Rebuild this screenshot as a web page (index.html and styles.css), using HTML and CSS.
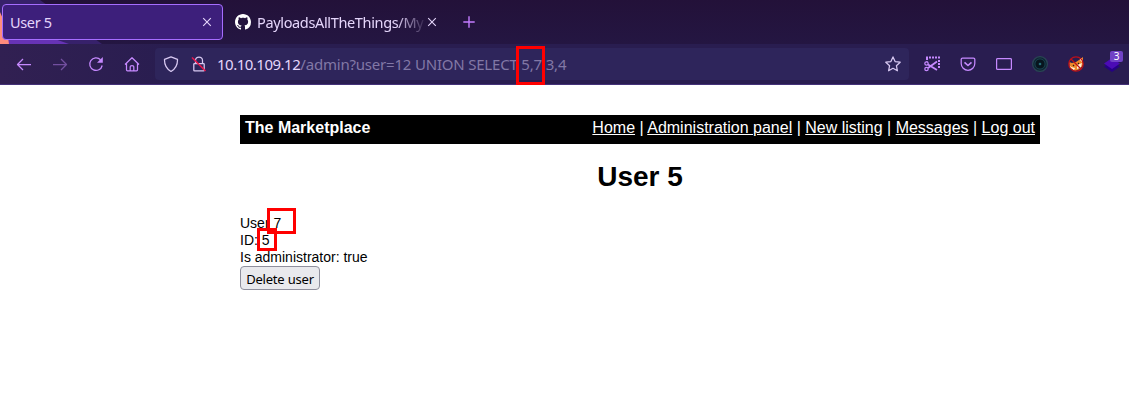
FILE: index.html
```html
<!DOCTYPE html>
<html lang="en">
<head>
<meta charset="utf-8">
<title>User 5</title>
<link rel="stylesheet" href="styles.css">
</head>
<body>
<header class="browser">
  <div class="tabs">
    <svg class="theme-art" width="240" height="44" viewBox="0 0 240 44"><path d="M0 0h40l62 44H0z" fill="#37216b"/><path d="M0 20l69 24H0z" fill="#6733b5"/><path d="M0 12q7 14 9 32H0z" fill="#ff8c7d"/></svg>
    <div class="tab active"><span class="tab-title">User 5</span><svg class="close" width="10" height="10" viewBox="0 0 10 10"><path d="M1.2 1.2l7.6 7.6M8.8 1.2L1.2 8.8"/></svg></div>
    <div class="tab"><svg class="github" width="16" height="16" viewBox="0 0 16 16"><path d="M8 0C3.58 0 0 3.58 0 8c0 3.54 2.29 6.53 5.47 7.59.4.07.55-.17.55-.38 0-.19-.01-.82-.01-1.49-2.01.37-2.53-.49-2.69-.94-.09-.23-.48-.94-.82-1.13-.28-.15-.68-.52-.01-.53.63-.01 1.08.58 1.23.82.72 1.21 1.87.87 2.33.66.07-.52.28-.87.51-1.07-1.78-.2-3.64-.89-3.64-3.95 0-.87.31-1.59.82-2.15-.08-.2-.36-1.02.08-2.12 0 0 .67-.21 2.2.82.64-.18 1.32-.27 2-.27s1.36.09 2 .27c1.53-1.04 2.2-.82 2.2-.82.44 1.1.16 1.92.08 2.12.51.56.82 1.27.82 2.15 0 3.07-1.87 3.75-3.65 3.95.29.25.54.73.54 1.48 0 1.07-.01 1.93-.01 2.2 0 .21.15.46.55.38A8.01 8.01 0 0016 8c0-4.42-3.58-8-8-8z"/></svg><span class="tab-title faded">PayloadsAllTheThings/My</span><svg class="close" width="10" height="10" viewBox="0 0 10 10"><path d="M1.2 1.2l7.6 7.6M8.8 1.2L1.2 8.8"/></svg></div>
    <svg class="new-tab" width="12" height="12" viewBox="0 0 12 12"><path d="M6 .3v11.4M.3 6h11.4"/></svg>
  </div>
  <div class="toolbar">
    <div class="nav-buttons">
      <svg class="icon" viewBox="0 0 16 16"><path d="M15 8.500H1.500M7 3L1.500 8.500 7 14"/></svg>
      <svg class="icon disabled" viewBox="0 0 16 16"><path d="M1 8.500h13.500M9 3l5.500 5.500L9 14"/></svg>
      <svg class="icon" viewBox="0 0 16 16"><path d="M12.5 3.700A6.300 6.300 0 1 0 14.200 9.500"/><path d="M14.800 1v5.800H9z" fill="#c689ff" stroke="none"/></svg>
      <svg class="icon" viewBox="0 0 16 16"><path d="M1 8.500l7-6.800 7 6.800M2.500 7.300v6.500q0 1 1 1h9q1 0 1-1V7.300M6.200 14.800v-4q0-1.300 1.800-1.300t1.800 1.300v4"/></svg>
    </div>
    <div class="urlbar">
      <svg class="icon pale" viewBox="0 0 16 16"><path d="M8 .8l6.500 2.600C14.700 9 12.500 13 8 15.500 3.500 13 1.300 9 1.500 3.400z"/></svg>
      <svg class="icon pale lock" viewBox="0 0 16 16"><path d="M4.500 7.500V4.500a3.500 3.500 0 0 1 7 0v3M3.500 7.500h9q.7 0 .7.700v6q0 .7-.7.700h-9q-.7 0-.7-.700v-6q0-.7.700-.700z"/><path d="M1 1.500l13.500 13.500" stroke="#e8174b" stroke-width="1.600"/></svg>
      <span class="url"><b>10.10.109.12</b>/admin?user=12 UNION SELECT 5,7,3,4</span>
      <svg class="icon pale star" viewBox="0 0 16 16"><path d="M8 .9l2.100 4.700 5.100.6-3.800 3.500 1 5.100L8 12.300l-4.400 2.500 1-5.100L.8 6.200l5.100-.6z"/></svg>
    </div>
    <div class="extensions">
      <svg class="icon" viewBox="0 0 16 16"><path d="M2 1.500h14" stroke-width="2" stroke-dasharray="2 1"/><path d="M15 4v8M3 2v3.500" stroke-width="2" stroke-dasharray="2 1"/><circle cx="2.500" cy="7.500" r="1.700"/><circle cx="2.500" cy="13" r="1.700"/><path d="M4 8.500l9 5.500M4 12l9-6.500" stroke-width="1.800"/></svg>
      <svg class="icon" viewBox="0 0 16 16"><path d="M2.500 2h11q1.300 0 1.300 1.300V7.500a6.800 6.800 0 0 1-13.600 0V3.300Q1.200 2 2.500 2z"/><path d="M4.500 6.300L8 9.500l3.500-3.200" stroke-width="1.600"/></svg>
      <svg class="icon" viewBox="0 0 16 16"><rect x=".6" y="2.600" width="14.800" height="10.800" rx="1"/></svg>
      <svg class="icon" viewBox="0 0 16 16"><circle cx="8" cy="8" r="7.400" fill="#102532" stroke="#294454"/><circle cx="8" cy="8" r="5.100" fill="#08151e" stroke="#174452" stroke-width="1"/><circle cx="8" cy="8" r="1.300" fill="#246d79" stroke="none"/></svg>
      <svg class="icon" viewBox="0 0 16 16"><path d="M1 6l3 1 4-1 3-2 4-3v8l-3 4-5 2-5-3z" fill="#ed872a" stroke="none"/><path d="M1 9l2 2 4 1-1 2-4-3zM9 9l5-2-1 4-4 2zM13 2l1 1v3l-2-2z" fill="#fff0dd" stroke="none"/><path d="M5 9l1 1M10 7l1 1" stroke="#35180f"/><circle cx="8" cy="8" r="7.200" stroke="#bc1019"/><path d="M3 3l10 10" stroke="#bc1019"/></svg>
      <div class="layers"><svg class="icon" viewBox="0 0 16 16"><path d="M8 5l8 5.500-8 5.500-8-5.500z" fill="#260084" stroke="none"/><path d="M8 2l8 5.500L8 13 0 7.500z" fill="#4b0bb5" stroke="none"/></svg><span class="badge">3</span></div>
    </div>
  </div>
</header>
<main class="page">
  <nav class="site-nav"><strong>The Marketplace</strong><div><a href="#">Home</a> | <a href="#">Administration panel</a> | <a href="#">New listing</a> | <a href="#">Messages</a> | <a href="#">Log out</a></div></nav>
  <h1>User 5</h1>
  <div class="details">User 7<br>ID: 5<br>Is administrator: true</div>
  <button class="delete">Delete user</button>
</main>
<div class="mark mark-url"></div>
<div class="mark mark-user"></div>
<div class="mark mark-id"></div>
</body>
</html>
```
FILE: styles.css
```css
* { box-sizing: border-box; }
body { margin: 0; height: 414px; overflow: hidden; position: relative; background: #fff; font-family: "Liberation Sans", Arial, sans-serif; color: #000; }
svg { display: block; flex: none; fill: none; }
.browser { height: 85px; font-family: "Noto Sans", sans-serif; }
.tabs { position: relative; display: flex; height: 44px; padding: 4px 0 4px 2px; background: linear-gradient(#231139, #241642); }
.theme-art { position: absolute; left: 0; top: 0; }
.tab { position: relative; display: flex; align-items: center; width: 221px; height: 36px; padding: 0 10px 0 8px; color: #e5d6fb; font-size: 14.5px; letter-spacing: -.35px; }
.tab.active { border: 1px solid #a66dff; border-radius: 4px; background: #3d1f7b; padding-left: 7px; }
.tab + .tab { margin-left: 4px; width: 220px; }
.tab-title { flex: 1; white-space: nowrap; overflow: hidden; }
.faded { -webkit-mask-image: linear-gradient(90deg, #000 82%, transparent); mask-image: linear-gradient(90deg, #000 82%, transparent); }
.github { fill: #fff; margin-right: 6px; }
.close { stroke: #e5d6fb; stroke-width: 1.1; }
.new-tab { align-self: center; margin-left: 16px; stroke: #c47cff; stroke-width: 1.4; }
.toolbar { display: flex; align-items: center; height: 41px; background: linear-gradient(90deg, #312052, #291d50 15%, #291d50); border-bottom: 1px solid #443178; }
.nav-buttons { display: flex; gap: 20px; width: 155px; padding-left: 16px; }
.icon { width: 16px; height: 16px; stroke: #c689ff; stroke-width: 1.25; stroke-linecap: butt; stroke-linejoin: round; }
.disabled { opacity: .45; }
.pale { stroke: #d8c9f2; }
.urlbar { display: flex; align-items: center; width: 754px; height: 32px; padding: 0 8px; border-radius: 4px; background: #2e255b; }
.lock { margin-left: 12px; }
.url { flex: 1; margin-left: 10px; color: #8278a6; font-size: 15px; letter-spacing: -.2px; white-space: pre; }
.url b { color: #e5d6fb; font-weight: 400; letter-spacing: -.5px; }
.extensions { display: flex; gap: 20px; margin-left: 15px; }
.layers { position: relative; }
.badge { position: absolute; left: 6px; top: -5px; width: 13px; height: 11px; border-radius: 2px; background: #7042c5; color: #fff; font-size: 10px; line-height: 11px; text-align: center; }
.page { width: 800px; margin: 30px auto 0 240px; }
.site-nav { display: flex; justify-content: space-between; height: 29px; padding: 4px 5px; background: #000; color: #fff; font-size: 16px; line-height: 18px; }
.site-nav a { color: #fff; }
h1 { margin: 17px 0 22px; text-align: center; font-size: 28px; line-height: 32px; }
.details { font-size: 14px; line-height: 17px; }
.delete { display: block; width: 80px; height: 24px; margin-top: 0; padding: 1px 0 0; border: 1px solid #8f8f9d; border-radius: 4px; background: #e9e9ed; color: #000; font: 13px "Noto Sans", sans-serif; letter-spacing: -.2px; }
.mark { position: absolute; border: 3px solid #f00; }
.mark-url { left: 516px; top: 46px; width: 29px; height: 39px; }
.mark-user { left: 267px; top: 208px; width: 29px; height: 26px; }
.mark-id { left: 257px; top: 228px; width: 20px; height: 23px; }
```
